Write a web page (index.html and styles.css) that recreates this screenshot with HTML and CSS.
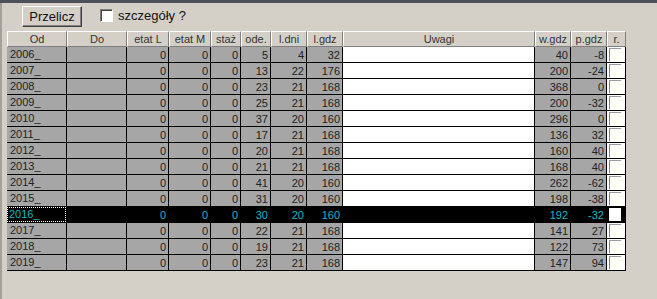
FILE: index.html
```html
<!DOCTYPE html>
<html lang="pl">
<head>
  <meta charset="UTF-8">
  <meta name="viewport" content="width=device-width, initial-scale=1.0">
  <link rel="stylesheet" href="styles.css">
</head>
<body>
  <div class="frame">
    <!-- toolbar -->
    <div class="toolbar">
      <button class="btn">Przelicz</button>
      <label class="chk"><span class="box"></span>szczegóły ?</label>
    </div>

    <table class="grid">
      <colgroup>
        <col style="width:60px"><col style="width:60px"><col style="width:42px"><col style="width:42px">
        <col style="width:30px"><col style="width:30px"><col style="width:36px"><col style="width:36px">
        <col style="width:192px"><col style="width:36px"><col style="width:36px"><col style="width:19px">
      </colgroup>
      <thead>
        <tr>
          <th>Od</th><th>Do</th><th>etat L</th><th>etat M</th><th>staż</th><th>ode.</th>
          <th>l.dni</th><th>l.gdz</th><th>Uwagi</th><th>w.gdz</th><th>p.gdz</th><th>r.</th>
        </tr>
      </thead>
      <tbody id="rows"></tbody>
    </table>
  </div>

  <script>
let data = [
['2006_', 0, 0, 0, 5, 4, 32, 40, -8],
['2007_', 0, 0, 0, 13, 22, 176, 200, -24],
['2008_', 0, 0, 0, 23, 21, 168, 368, 0],
['2009_', 0, 0, 0, 25, 21, 168, 200, -32],
['2010_', 0, 0, 0, 37, 20, 160, 296, 0],
['2011_', 0, 0, 0, 17, 21, 168, 136, 32],
['2012_', 0, 0, 0, 20, 21, 168, 160, 40],
['2013_', 0, 0, 0, 21, 21, 168, 168, 40],
['2014_', 0, 0, 0, 41, 20, 160, 262, -62],
['2015_', 0, 0, 0, 31, 20, 160, 198, -38],
['2016_', 0, 0, 0, 30, 20, 160, 192, -32],
['2017_', 0, 0, 0, 22, 21, 168, 141, 27],
['2018_', 0, 0, 0, 19, 21, 168, 122, 73],
['2019_', 0, 0, 0, 23, 21, 168, 147, 94],
];

let selected = 10;
let html = '';
data.forEach((r, i) => {
	let cls = i === selected ? ' class="sel"' : '';
	html += '<tr' + cls + '>';
	html += '<td class="txt"><span class="focus">' + r[0] + '</span></td>';
	html += '<td></td>';
	for (let k = 1; k <= 6; k++) {
		html += '<td class="num">' + r[k] + '</td>';
	}
	html += '<td class="note"></td>';
	html += '<td class="num">' + r[7] + '</td>';
	html += '<td class="num">' + r[8] + '</td>';
	html += '<td class="flag"><span class="mark"></span></td>';
	html += '</tr>';
});
document.getElementById('rows').innerHTML = html;
  </script>
</body>
</html>
```

FILE: styles.css
```css
html {
	background-color: #d4d0c8;
}

body {
	margin: 0;
	padding: 0;
	height: 299px;
	overflow: hidden;
	border-top: 3px solid #4b5157;
	font-family: "Liberation Sans", Arial, sans-serif;
	font-size: 11px;
	color: #222;
}

.frame {
	border-left: 2px solid #a4a09a;
	height: 296px;
}

.toolbar {
	height: 28px;
	display: flex;
	align-items: flex-start;
	padding-left: 20px;
}

.btn {
	margin-top: 3px;
	width: 60px;
	height: 21px;
	padding: 0;
	font-family: "Liberation Sans", Arial, sans-serif;
	font-size: 13px;
	color: #111;
	background-color: #d4d0c8;
	border: 1px solid;
	border-color: #fff #404040 #404040 #fff;
	box-shadow: inset -1px -1px 0 #808080;
}

.chk {
	display: flex;
	align-items: center;
	margin-left: 18px;
	margin-top: 5px;
	font-size: 13px;
	color: #111;
}

.chk .box {
	width: 11px;
	height: 11px;
	margin-right: 5px;
	background: #fff;
	border: 1px solid;
	border-color: #808080 #fff #fff #808080;
	box-shadow: inset 1px 1px 0 #404040;
}

.grid {
	margin-left: 5px;
	table-layout: fixed;
	border-collapse: separate;
	border-spacing: 0;
	width: 619px;
}

.grid th {
	height: 14px;
	padding: 0;
	font-weight: normal;
	text-align: center;
	color: #333;
	background-color: #d4d0c8;
	border: 1px solid;
	border-color: #fff #808080 #808080 #fff;
	white-space: nowrap;
	overflow: hidden;
}

.grid td {
	height: 15px;
	padding: 0 2px;
	background-color: #a6a6a6;
	border-right: 1px solid #000;
	border-bottom: 1px solid #000;
	white-space: nowrap;
	overflow: hidden;
}

.grid td.num {
	text-align: right;
}

.grid td.note,
.grid td.flag {
	background-color: #fff;
}

.grid td.flag {
	padding: 0 0 0 2px;
}

.mark {
	display: block;
	width: 11px;
	height: 12px;
	background: #fffff6;
	border-left: 1px solid #7d7d96;
	border-top: 1px solid #9a9aa8;
}

.focus {
	display: block;
	margin-left: -2px;
	padding-left: 2px;
	line-height: 13px;
	border: 1px dotted transparent;
}

/* selected row */
.grid tr.sel td {
	background-color: #000;
	color: #19b8c4;
}

.grid tr.sel .focus {
	border-color: #fff;
	margin-right: -2px;
	padding-left: 1px;
}

.grid tr.sel .mark {
	background: #fff;
	border-color: #fff;
}
```
